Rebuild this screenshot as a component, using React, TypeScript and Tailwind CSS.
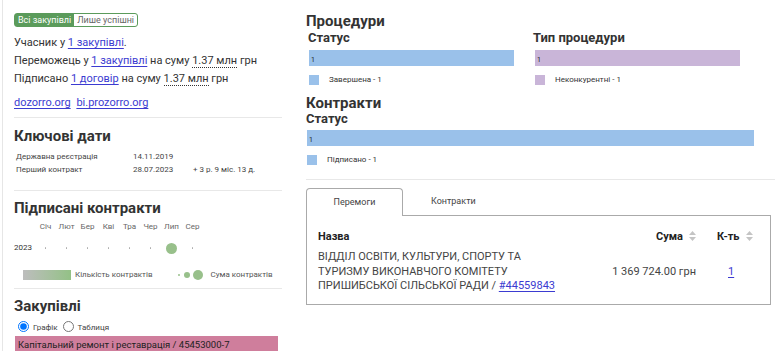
import React from "react";

const link = "text-[#3b3bd1] underline underline-offset-2";

const SortIcon = () => (
  <svg width="7" height="10" viewBox="0 0 7 10" className="inline-block ml-[6px] align-[-1px]">
    <path d="M3.5 0 L7 4 L0 4 Z" fill="#c4c4c4" />
    <path d="M3.5 10 L7 6 L0 6 Z" fill="#c4c4c4" />
  </svg>
);

const months = ["Січ", "Лют", "Бер", "Кві", "Тра", "Чер", "Лип", "Сер"];

const LeftColumn = () => (
  <div className="ml-[2px] w-[288px] shrink-0 border-l border-[#e6e6e6] pl-[11px] pr-[8px] pt-[13px]">
    {/* toggle */}
    <div className="flex h-[14px] w-fit rounded-[3px] border border-[#5b9b5b] text-[9px] leading-[12px]">
      <span className="flex items-center bg-[#5b9b5b] px-[3px] text-white">Всі закупівлі</span>
      <span className="flex items-center px-[3px] text-[#666]">Лише успішні</span>
    </div>

    <div className="mt-[7px] text-[11px] leading-[18px] text-[#333]">
      <p>
        Учасник у <a className={link}>1 закупівлі</a>.
      </p>
      <p>
        Переможець у <a className={link}>1 закупівлі</a> на суму{" "}
        <span className="border-b border-dotted border-[#333]">1.37 млн</span> грн
      </p>
      <p>
        Підписано <a className={link}>1 договір</a> на суму{" "}
        <span className="border-b border-dotted border-[#333]">1.37 млн</span> грн
      </p>
      <p className="mt-[6px]">
        <a className={link}>dozorro.org</a> <a className={link + " ml-[3px]"}>bi.prozorro.org</a>
      </p>
    </div>

    <div className="mt-[5px] border-t border-[#e8e8e8]" />

    <h2 className="mt-[8px] text-[15px] font-bold leading-[20px] text-[#333]">Ключові дати</h2>
    <div className="mt-[4px] pl-[2px] text-[8px] leading-[13px] text-[#444]">
      <div className="flex">
        <span className="w-[117px]">Державна реєстрація</span>
        <span>14.11.2019</span>
      </div>
      <div className="flex">
        <span className="w-[117px]">Перший контракт</span>
        <span className="w-[60px]">28.07.2023</span>
        <span>+ 3 р. 9 міс. 13 д.</span>
      </div>
    </div>

    <div className="mt-[14px] border-t border-[#e8e8e8]" />

    <h2 className="mt-[7px] text-[15px] font-bold leading-[20px] text-[#333]">Підписані контракти</h2>
    <div className="mt-[3px] flex text-[8px] leading-[12px] text-[#666]">
      <span className="w-[21px]" />
      {months.map((m) => (
        <span key={m} className="w-[21px] text-center">
          {m}
        </span>
      ))}
    </div>
    <div className="mt-[8px] flex h-[14px] items-center text-[8px] text-[#333]">
      <span className="w-[21px]">2023</span>
      {months.map((m, i) => (
        <span key={m} className="flex w-[21px] justify-center">
          {i === 6 ? (
            <span className="h-[11px] w-[11px] rounded-full bg-[#98c08b]" />
          ) : (
            <span className="h-[1.5px] w-[1.5px] rounded-full bg-[#aaa]" />
          )}
        </span>
      ))}
    </div>
    <div className="mt-[14px] flex h-[12px] items-center text-[8px] text-[#555]">
      <span className="ml-[9px] h-[10px] w-[48px] bg-gradient-to-r from-[#bdbdbd] to-[#93c186]" />
      <span className="ml-[4px]">Кількість контрактів</span>
      <span className="ml-[25px] h-[2px] w-[2px] rounded-full bg-[#98c08b]" />
      <span className="ml-[4px] h-[6px] w-[6px] rounded-full bg-[#98c08b]" />
      <span className="ml-[3px] h-[10px] w-[10px] rounded-full bg-[#98c08b]" />
      <span className="ml-[8px]">Сума контрактів</span>
    </div>

    <div className="mt-[7px] border-t border-[#e8e8e8]" />

    <h2 className="mt-[7px] text-[15px] font-bold leading-[20px] text-[#333]">Закупівлі</h2>
    <div className="mt-[3px] flex h-[14px] items-center pl-[4px] text-[8px] text-[#444]">
      <input type="radio" name="view" defaultChecked className="m-0 h-[11px] w-[11px]" />
      <span className="ml-[4px] mt-[3px]">Графік</span>
      <input type="radio" name="view" className="m-0 ml-[5px] h-[11px] w-[11px]" />
      <span className="ml-[4px] mt-[3px]">Таблиця</span>
    </div>
    <div className="mt-[3px] ml-[1px] h-[20px] w-[263px] bg-[#cf7e9c] pl-[3px] pt-[2px] text-[9.5px] text-[#222]">
      Капітальний ремонт і реставрація / 45453000-7
    </div>
  </div>
);

const Bar = ({ color, width }: { color: string; width: string }) => (
  <div className={`flex h-[16px] items-end pb-[2px] pl-[2px] text-[7px] leading-[8px] text-[#222] ${color} ${width}`}>1</div>
);

const RightColumn = () => (
  <div className="flex-1 pl-[16px] pt-[12px]">
    <h2 className="text-[15px] font-bold leading-[19px] text-[#333]">Процедури</h2>
    <div className="grid grid-cols-[227px_227px]">
      <div className="pl-[2px]">
        <h3 className="text-[13px] font-bold leading-[14px] text-[#333]">Статус</h3>
        <div className="ml-[1px] mt-[5px]">
          <Bar color="bg-[#9ac1ea]" width="w-[205px]" />
          <div className="mt-[8px] flex items-center text-[8px] text-[#333]">
            <span className="h-[10px] w-[10px] bg-[#9ac1ea]" />
            <span className="ml-[10px]">Завершена - 1</span>
          </div>
        </div>
      </div>
      <div>
        <h3 className="text-[13px] font-bold leading-[14px] text-[#333]">Тип процедури</h3>
        <div className="ml-[2px] mt-[5px]">
          <Bar color="bg-[#c9b5d8]" width="w-[205px]" />
          <div className="mt-[8px] flex items-center text-[8px] text-[#333]">
            <span className="h-[10px] w-[10px] bg-[#c9b5d8]" />
            <span className="ml-[10px]">Неконкурентні - 1</span>
          </div>
        </div>
      </div>
    </div>

    <h2 className="mt-[8px] text-[15px] font-bold leading-[18px] text-[#333]">Контракти</h2>
    <h3 className="text-[13px] font-bold leading-[14px] text-[#333]">Статус</h3>
    <div className="ml-[1px] mt-[4px]">
      <Bar color="bg-[#9ac1ea]" width="w-[447px]" />
      <div className="mt-[8px] flex items-center text-[8px] text-[#333]">
        <span className="h-[10px] w-[10px] bg-[#9ac1ea]" />
        <span className="ml-[10px]">Підписано - 1</span>
      </div>
    </div>

    <div className="mt-[13px] border-t border-[#e8e8e8]" />

    {/* tabs */}
    <div className="mt-[8px] w-[465px]">
      <div className="relative z-10 flex h-[28px] text-[9px] text-[#444]">
        <div className="flex w-[97px] items-center justify-center rounded-t-[4px] border border-b-0 border-[#aaa] bg-white">
          Перемоги
        </div>
        <div className="ml-[28px] flex items-center">Контракти</div>
      </div>
      <div className="-mt-px h-[90px] border border-[#aaa] px-[11px] pt-[14px]">
        <div className="flex text-[11px] font-bold leading-[14px] text-[#222]">
          <span className="w-[290px]">Назва</span>
          <span className="w-[88px] text-right">
            Сума
            <SortIcon />
          </span>
          <span className="pl-[21px]">
            К-ть
            <SortIcon />
          </span>
        </div>
        <div className="mt-[6px] flex items-center text-[11px] leading-[14.5px] text-[#444]">
          <span className="w-[290px] uppercase">
            ВІДДІЛ ОСВІТИ, КУЛЬТУРИ, СПОРТУ ТА
            <br />
            ТУРИЗМУ ВИКОНАВЧОГО КОМІТЕТУ
            <br />
            ПРИШИБСЬКОЇ СІЛЬСЬКОЇ РАДИ / <a className={link + " normal-case"}>#44559843</a>
          </span>
          <span className="w-[88px] text-right">1 369 724.00 грн</span>
          <span className="pl-[32px]">
            <a className={link}>1</a>
          </span>
        </div>
      </div>
    </div>
  </div>
);

export default function App() {
  return (
    <div className="flex h-[351px] w-[775px] overflow-hidden bg-white font-['Roboto',sans-serif]">
      <LeftColumn />
      <RightColumn />
    </div>
  );
}
